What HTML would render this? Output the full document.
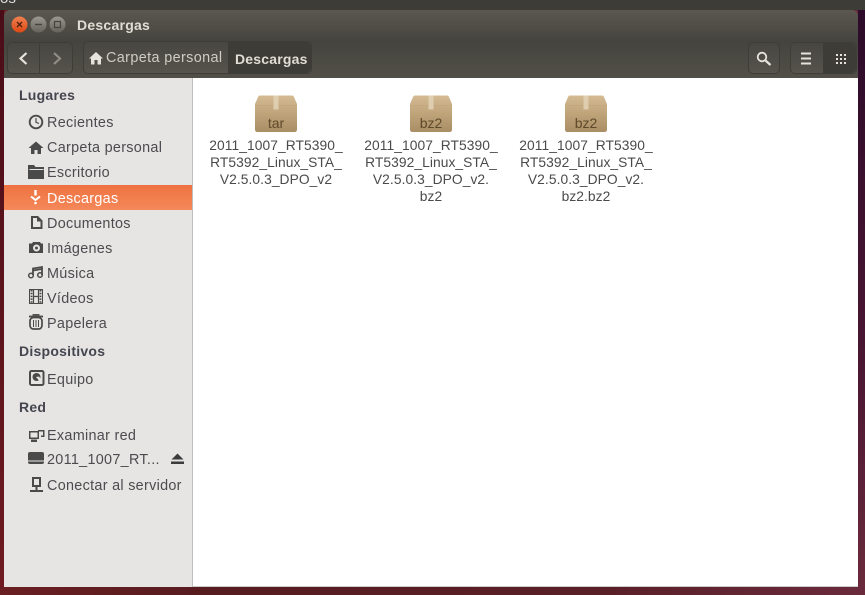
<!DOCTYPE html>
<html><head><meta charset="utf-8">
<style>
html,body{margin:0;padding:0}
body{width:865px;height:595px;overflow:hidden;position:relative;background:linear-gradient(90deg,#6a1f22 0,#561c1f 25%,#5a2028 70%,#6a2a3c 100%);font-family:"Liberation Sans",sans-serif}
.abs,.t,.h,svg{position:absolute}
#top{left:0;top:0;width:865px;height:10px;background:#3d3c37}
#ls{left:0;top:10px;width:4px;height:577px;background:linear-gradient(#4a0d18,#6e1a20)}
#rs{left:858px;top:10px;width:7px;height:577px;background:linear-gradient(#2c0c2a,#4a1632 60%,#6a2a3c)}
#win{left:4px;top:10px;width:854px;height:68px;border-radius:6px 6px 0 0;background:linear-gradient(#5a5850 0,#46453f 44%,#45443e 46%,#514f48 100%)}
#side{left:4px;top:78px;width:189px;height:509px;background:#e6e5e3;border-right:1px solid #c0bfbb;box-sizing:border-box}
#main{left:193px;top:78px;width:665px;height:509px;background:#fff;border-bottom:1px solid #ccc;box-sizing:border-box}
#sel{left:4px;top:185px;width:188px;height:25px;background:linear-gradient(#ee7240,#f5885a)}
.t{font-size:14.4px;line-height:18px;color:#4c4c50;white-space:nowrap;letter-spacing:.3px}
.h{font-size:14px;line-height:18px;font-weight:bold;color:#45454f;white-space:nowrap;letter-spacing:.25px}
.btn{position:absolute;top:42px;height:32px;box-sizing:border-box;border:1px solid #3e3d38;border-radius:5px;background:linear-gradient(#474641,#55534c)}
.dark{position:absolute;background:#3d3c37}
.f{position:absolute;top:137px;width:150px;text-align:center;font-size:13.8px;line-height:17.1px;color:#4a4a4a;letter-spacing:.07px}
.lab{position:absolute;width:58px;text-align:center;font-size:14px;line-height:14px;color:#5e4a2a;top:116px}
</style></head><body>
<div class="abs" id="ls"></div>
<div class="abs" id="rs"></div>
<div class="abs" id="top"></div>
<div class="abs" style="left:0;top:-9px;font-size:15px;color:#ddd;line-height:15px">os</div>
<div class="abs" id="win"></div>
<div class="abs" id="side"></div>
<div class="abs" id="main"></div>
<div class="abs" id="sel"></div>

<svg style="left:0;top:0" width="80" height="40">
<defs><linearGradient id="g" x1="0" y1="0" x2="0" y2="1"><stop offset="0" stop-color="#9a9890"/><stop offset="1" stop-color="#64625b"/></linearGradient>
<linearGradient id="r" x1="0" y1="0" x2="0" y2="1"><stop offset="0" stop-color="#f08050"/><stop offset="1" stop-color="#dd4814"/></linearGradient></defs>
<circle cx="19.500" cy="24.500" r="8" fill="url(#r)"/><path d="M17 22l5 5M22 22l-5 5" stroke="#4a2010" stroke-width="1.300"/>
<circle cx="38.500" cy="24.500" r="8" fill="url(#g)"/><path d="M35 24.500h7" stroke="#45443e" stroke-width="1.400"/>
<circle cx="57.500" cy="24.500" r="8" fill="url(#g)"/><rect x="54.500" y="21.500" width="6" height="6" fill="none" stroke="#45443e" stroke-width="1.200"/>
</svg>
<div class="abs" style="left:77px;top:16px;font-size:14px;line-height:18px;font-weight:bold;color:#e0ddd4;letter-spacing:.25px">Descargas</div>

<div class="btn" style="left:7px;width:66px"></div>
<div class="abs" style="left:39px;top:43px;width:1px;height:30px;background:#3e3d38"></div>
<svg style="left:7px;top:42px" width="66" height="32"><path d="M19.500 11l-6 5.500 6 5.500" fill="none" stroke="#e6e3dc" stroke-width="2.200"/><path d="M47 11l6 5.500-6 5.500" fill="none" stroke="#8f8d85" stroke-width="2.200"/></svg>

<div class="btn" style="left:83px;width:229px;top:41px;height:33px"></div>
<div class="dark" style="left:228px;top:42px;width:83px;height:31px;border-radius:0 5px 5px 0"></div>
<svg style="left:88px;top:51px" width="16" height="14"><path d="M8 1L1 7.500h2V13.500h3.500V9h3v4.500H13V7.500h2z" fill="#e6e3dc"/></svg>
<div class="abs" style="left:106px;top:49px;font-size:14.4px;line-height:18px;color:#cfccc3;letter-spacing:.38px;white-space:nowrap">Carpeta personal</div>
<div class="abs" style="left:235px;top:50px;font-size:14px;line-height:18px;font-weight:bold;color:#e0ddd4;letter-spacing:.2px">Descargas</div>

<div class="btn" style="left:748px;width:32px"></div>
<svg style="left:748px;top:42px" width="32" height="32"><circle cx="14" cy="15" r="4.300" fill="none" stroke="#e6e3dc" stroke-width="1.800"/><path d="M17.500 18.500l5 4.500" stroke="#e6e3dc" stroke-width="2.200"/></svg>
<div class="btn" style="left:790px;width:67px"></div>
<div class="dark" style="left:823px;top:43px;width:33px;height:30px;border-radius:0 5px 5px 0"></div>
<svg style="left:790px;top:42px" width="67" height="32">
<path d="M11 11.500h10M11 16.500h10M11 21.500h10" stroke="#e6e3dc" stroke-width="2"/>
<path d="M46 12h2v2h-2zM50 12h2v2h-2zM54 12h2v2h-2zM46 16h2v2h-2zM50 16h2v2h-2zM54 16h2v2h-2zM46 20h2v2h-2zM50 20h2v2h-2zM54 20h2v2h-2z" fill="#e6e3dc"/></svg>

<div class="h" style="left:19px;top:86px">Lugares</div>
<div class="t" style="left:47px;top:114px">Recientes</div>
<div class="t" style="left:47px;top:139px">Carpeta personal</div>
<div class="t" style="left:47px;top:164px">Escritorio</div>
<div class="t" style="left:47px;top:190px;color:#fff">Descargas</div>
<div class="t" style="left:47px;top:215px">Documentos</div>
<div class="t" style="left:47px;top:240px">Imágenes</div>
<div class="t" style="left:47px;top:265px">Música</div>
<div class="t" style="left:47px;top:290px">Vídeos</div>
<div class="t" style="left:47px;top:315px">Papelera</div>
<div class="h" style="left:19px;top:342px">Dispositivos</div>
<div class="t" style="left:47px;top:371px">Equipo</div>
<div class="h" style="left:19px;top:398px">Red</div>
<div class="t" style="left:47px;top:427px">Examinar red</div>
<div class="t" style="left:47px;top:451px">2011_1007_RT...</div>
<div class="t" style="left:47px;top:477px">Conectar al servidor</div>

<svg style="left:0;top:0" width="192" height="500" fill="#4a4a4a" stroke="none">
<!-- clock -->
<g fill="none" stroke="#4a4a4a"><circle cx="36" cy="122" r="6.300" stroke-width="1.900"/><path d="M36 118v4.300l3 1.200" stroke-width="1.200"/></g>
<!-- home -->
<path d="M36 141.500l-7.500 6.500H31v6h3.500v-4h3v4H41v-6h2.500z"/>
<!-- folder -->
<path d="M28 165h6l1.500 2H44v12H28z"/><path d="M29.500 169h14v1h-14z" fill="#e6e5e3"/>
<!-- downloads -->
<g fill="none" stroke="#fff"><path d="M35.500 190v5.500" stroke-width="2.400"/><path d="M31 196.500l4.500 3.500 4.500-3.500" stroke-width="2"/></g><circle cx="35.500" cy="203" r="1.300" fill="#fff"/>
<!-- document -->
<path d="M31 216h7l4.500 4.500V229H31zM33 218v9h7.500v-5.500H37V218z" fill-rule="evenodd"/>
<!-- camera -->
<path d="M29 243.500h3l1-1.500h7l1 1.500h2V253H29zM36.500 244.500a3.500 3.500 0 1 0 .01 0zM36.500 246.500a1.500 1.500 0 1 1-.01 0z" fill-rule="evenodd"/>
<!-- music -->
<path d="M33 275v-6.500l9-1.500v8" fill="none" stroke="#4a4a4a" stroke-width="1.800"/><path d="M33 270.500l9-1.500" stroke="#4a4a4a" stroke-width="1.800"/>
<circle cx="31" cy="275.500" r="2.300" fill="none" stroke="#4a4a4a" stroke-width="1.500"/><circle cx="40" cy="275" r="2.300" fill="none" stroke="#4a4a4a" stroke-width="1.500"/>
<!-- film -->
<g fill="none" stroke="#4a4a4a"><path d="M29.500 289.500h13v14h-13z" stroke-width="1"/><path d="M33.500 289.500v14M38.500 289.500v14" stroke-width="1.200"/><path d="M33.500 296.500h5" stroke-width="1.300"/><path d="M31.500 290v13M40.500 290v13" stroke-width="2" stroke-dasharray="1.500 1.300"/></g>
<!-- trash -->
<g fill="none" stroke="#4a4a4a"><path d="M29 316.500h14" stroke-width="1.800"/><path d="M32.500 314.800h7" stroke-width="1.500"/><rect x="30" y="317.500" width="12" height="11.500" rx="3.500" stroke-width="1.700"/><path d="M33.500 320v7M36 320v7M38.500 320v7" stroke-width="1"/></g>
<!-- drive -->
<rect x="30" y="371" width="13.500" height="14" rx="1.500" fill="none" stroke="#4a4a4a" stroke-width="2"/><circle cx="36.500" cy="377" r="4" /><path d="M36 377l3 3.500 2-1-2-3z" fill="#e6e5e3"/>
<!-- network -->
<path d="M29 431h10v8h-10zM30.500 432.500v5h7v-5z" fill-rule="evenodd"/><path d="M31 439.500h6v2.500h-6z"/><path d="M38 430h6.500v7H41v-1.500h2v-4h-5z"/>
<!-- disk -->
<rect x="28" y="452" width="16" height="12" rx="2"/><rect x="28" y="460.500" width="16" height="1" fill="#e6e5e3"/>
<!-- eject -->
<path d="M171.500 459.500l6-6 6 6zM171 461.500h13v2.500h-13z" fill="#3c3c3c"/>
<!-- server -->
<path d="M32 477h9v10h-9zM34 479v6h5v-6zM35.500 487h2v3h5.500v2H30v-2h5.500z" fill-rule="evenodd"/>
</svg>

<div class="abs" style="left:192px;top:310px;width:1px;height:40px;border-left:1px dotted #bbb"></div>

<svg style="left:0;top:0;pointer-events:none" width="865" height="595">
<defs>
<linearGradient id="box" x1="0" y1="0" x2="0" y2="1"><stop offset="0" stop-color="#d4bb94"/><stop offset=".55" stop-color="#bda177"/><stop offset="1" stop-color="#a98d65"/></linearGradient>
<g id="pk"><path d="M5 0.500H37Q38.500 .5 39 2L42 9V34.500Q42 37 39.500 37H2.500Q0 37 0 34.500V9L3 2Q3.500 .5 5 .5z" fill="url(#box)"/><path d="M.5 10.500H41.500" stroke="#c3a87f" stroke-width="1"/><rect x="18.500" y="0.500" width="5" height="14" fill="#e2d2b6" opacity=".85"/></g>
</defs>
<use href="#pk" x="255" y="95"/><use href="#pk" x="410" y="95"/><use href="#pk" x="565" y="95"/>
</svg>
<div class="lab" style="left:247px">tar</div>
<div class="lab" style="left:402px">bz2</div>
<div class="lab" style="left:557px">bz2</div>

<div class="f" style="left:201px">2011_1007_RT5390_<br>RT5392_Linux_STA_<br>V2.5.0.3_DPO_v2</div>
<div class="f" style="left:356px">2011_1007_RT5390_<br>RT5392_Linux_STA_<br>V2.5.0.3_DPO_v2.<br>bz2</div>
<div class="f" style="left:511px">2011_1007_RT5390_<br>RT5392_Linux_STA_<br>V2.5.0.3_DPO_v2.<br>bz2.bz2</div>
</body></html>
